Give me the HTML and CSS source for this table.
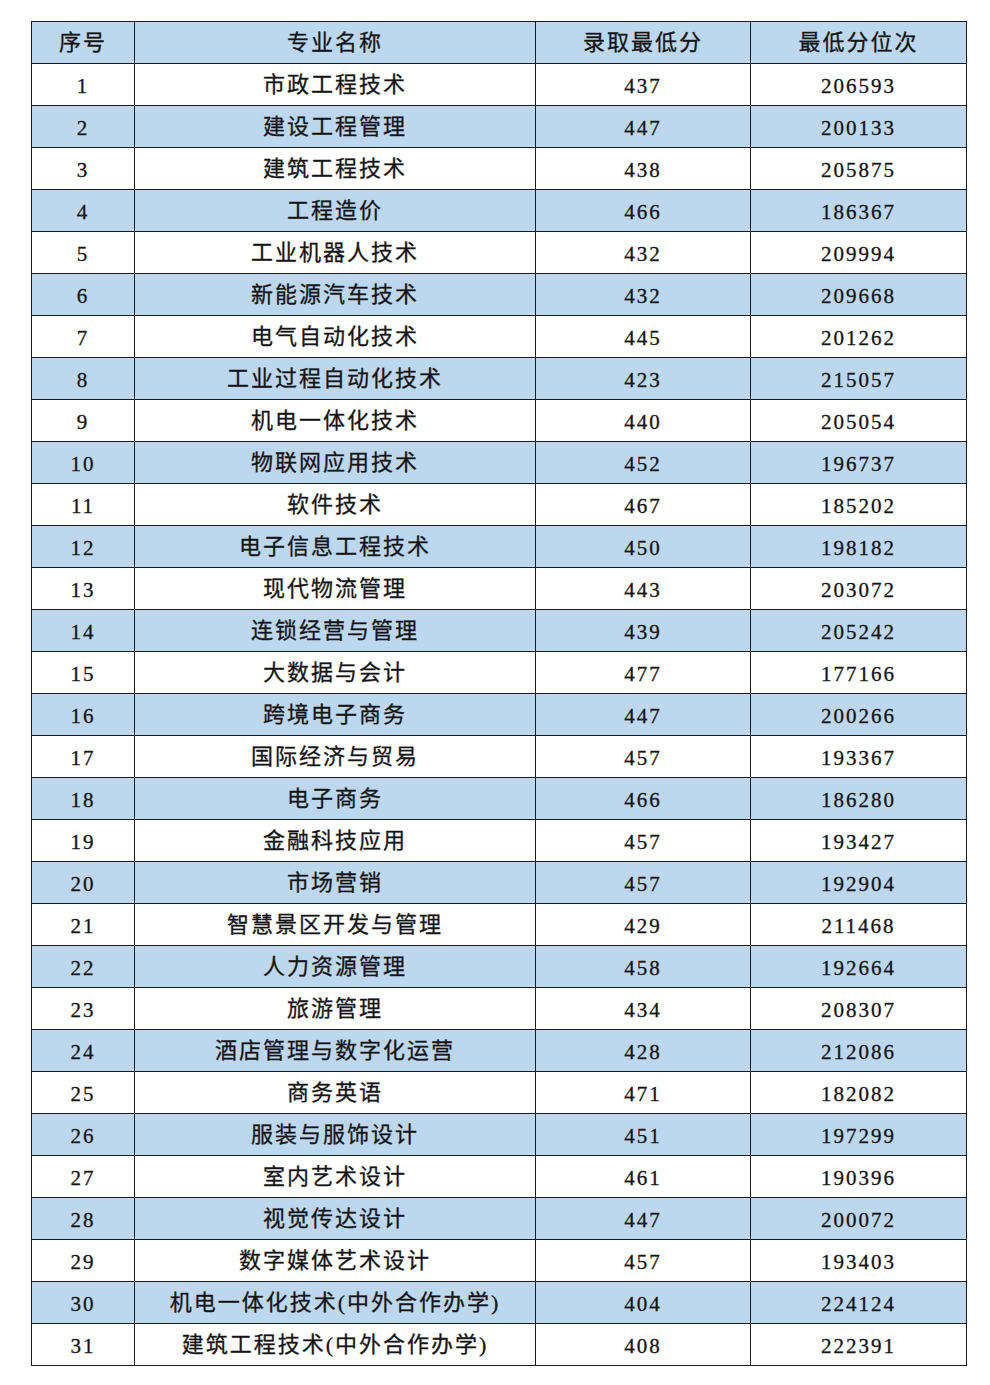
FILE: index.html
```html
<!DOCTYPE html>
<html lang="zh">
<head>
<meta charset="utf-8">
<link rel="stylesheet" href="styles.css">
</head>
<body>
<div class="page">
<table class="scores">
<colgroup><col class="c1"><col class="c2"><col class="c3"><col class="c4"></colgroup>
<thead>
<tr><th>序号</th><th>专业名称</th><th>录取最低分</th><th>最低分位次</th></tr>
</thead>
<tbody>
<tr><td>1</td><td>市政工程技术</td><td>437</td><td>206593</td></tr>
<tr><td>2</td><td>建设工程管理</td><td>447</td><td>200133</td></tr>
<tr><td>3</td><td>建筑工程技术</td><td>438</td><td>205875</td></tr>
<tr><td>4</td><td>工程造价</td><td>466</td><td>186367</td></tr>
<tr><td>5</td><td>工业机器人技术</td><td>432</td><td>209994</td></tr>
<tr><td>6</td><td>新能源汽车技术</td><td>432</td><td>209668</td></tr>
<tr><td>7</td><td>电气自动化技术</td><td>445</td><td>201262</td></tr>
<tr><td>8</td><td>工业过程自动化技术</td><td>423</td><td>215057</td></tr>
<tr><td>9</td><td>机电一体化技术</td><td>440</td><td>205054</td></tr>
<tr><td>10</td><td>物联网应用技术</td><td>452</td><td>196737</td></tr>
<tr><td>11</td><td>软件技术</td><td>467</td><td>185202</td></tr>
<tr><td>12</td><td>电子信息工程技术</td><td>450</td><td>198182</td></tr>
<tr><td>13</td><td>现代物流管理</td><td>443</td><td>203072</td></tr>
<tr><td>14</td><td>连锁经营与管理</td><td>439</td><td>205242</td></tr>
<tr><td>15</td><td>大数据与会计</td><td>477</td><td>177166</td></tr>
<tr><td>16</td><td>跨境电子商务</td><td>447</td><td>200266</td></tr>
<tr><td>17</td><td>国际经济与贸易</td><td>457</td><td>193367</td></tr>
<tr><td>18</td><td>电子商务</td><td>466</td><td>186280</td></tr>
<tr><td>19</td><td>金融科技应用</td><td>457</td><td>193427</td></tr>
<tr><td>20</td><td>市场营销</td><td>457</td><td>192904</td></tr>
<tr><td>21</td><td>智慧景区开发与管理</td><td>429</td><td>211468</td></tr>
<tr><td>22</td><td>人力资源管理</td><td>458</td><td>192664</td></tr>
<tr><td>23</td><td>旅游管理</td><td>434</td><td>208307</td></tr>
<tr><td>24</td><td>酒店管理与数字化运营</td><td>428</td><td>212086</td></tr>
<tr><td>25</td><td>商务英语</td><td>471</td><td>182082</td></tr>
<tr><td>26</td><td>服装与服饰设计</td><td>451</td><td>197299</td></tr>
<tr><td>27</td><td>室内艺术设计</td><td>461</td><td>190396</td></tr>
<tr><td>28</td><td>视觉传达设计</td><td>447</td><td>200072</td></tr>
<tr><td>29</td><td>数字媒体艺术设计</td><td>457</td><td>193403</td></tr>
<tr><td>30</td><td>机电一体化技术(中外合作办学)</td><td>404</td><td>224124</td></tr>
<tr><td>31</td><td>建筑工程技术(中外合作办学)</td><td>408</td><td>222391</td></tr>
</tbody>
</table>
</div>
</body>
</html>
```

FILE: styles.css
```css
html, body {
  margin: 0;
  padding: 0;
  background: #ffffff;
}

.page {
  padding: 21px 0 0 31px;
}

.scores {
  border-collapse: collapse;
  table-layout: fixed;
  width: 935px;
  font-family: "Liberation Serif", "Noto Sans CJK SC", serif;
  font-size: 21px;
  color: #141414;
}

.c1 { width: 103px; }
.c2 { width: 401px; }
.c3 { width: 215px; }
.c4 { width: 216px; }

.scores th,
.scores td {
  border: 1px solid #1a1a1a;
  height: 42px;
  padding: 2px 0 0 0;
  line-height: 24px;
  text-align: center;
  vertical-align: middle;
  letter-spacing: 2px;
  font-weight: normal;
  -webkit-text-stroke: 0.3px #141414;
  box-sizing: border-box;
}

.scores th,
.scores td:nth-child(2) {
  font-size: 22px;
  padding-top: 0;
}

.scores thead th {
  background: #bdd7ee;
}

.scores tbody tr:nth-child(even) td {
  background: #bdd7ee;
}
```
